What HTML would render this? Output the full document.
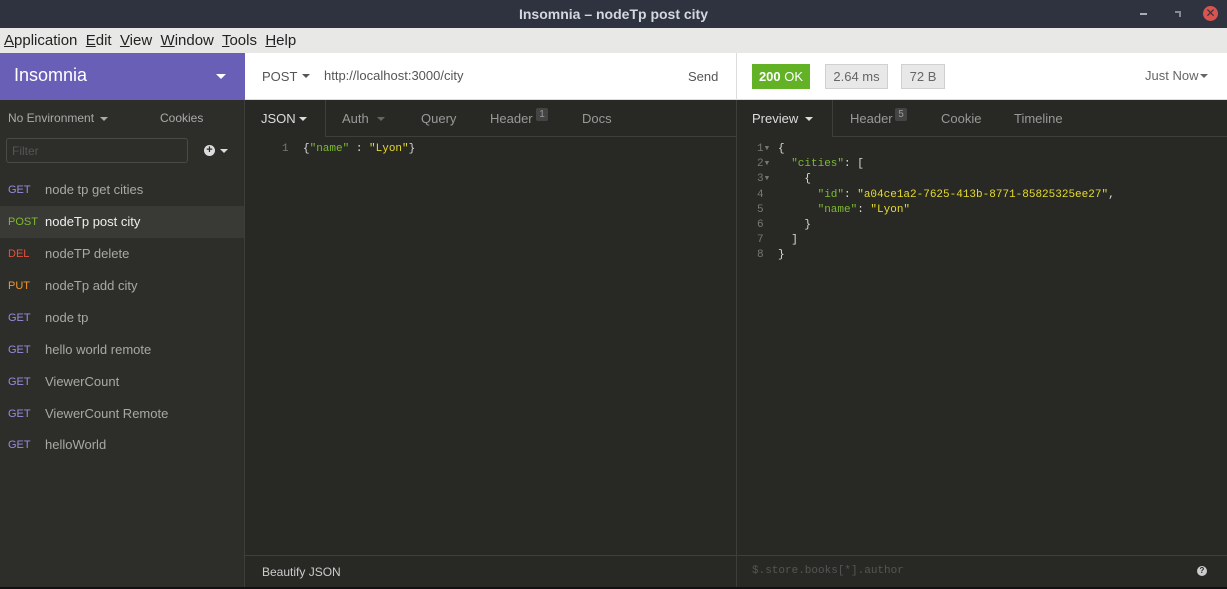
<!DOCTYPE html>
<html><head><style>
*{margin:0;padding:0;box-sizing:border-box}
body{width:1227px;height:589px;overflow:hidden;background:#282925;font-family:"Liberation Sans","DejaVu Sans",sans-serif;position:relative}
.a{position:absolute;white-space:nowrap}
.mono{font-family:"Liberation Mono","DejaVu Sans Mono",monospace}
.row{position:absolute;left:0;width:244px;height:32px;line-height:32px}
.row .m{position:absolute;left:8px;font-size:11px}
.row .n{position:absolute;left:45px;font-size:13px;color:#a8a8a4}
</style></head><body>
<div class="a" style="left:0;top:0;width:1227px;height:28px;background:#2f3340"></div>
<div class="a" style="left:0;top:6px;width:1227px;text-align:center;color:#d3d7df;font-size:14px;font-weight:bold">Insomnia – nodeTp post city</div>
<div class="a" style="left:1140px;top:13px;width:7px;height:2px;background:#aab"></div>
<div class="a" style="left:1175px;top:11px;width:6px;height:6px;border-top:2px solid #889;border-right:2px solid #889"></div>
<div class="a" style="left:1203px;top:6px;width:15px;height:15px;border-radius:50%;background:#d9534f;color:#2f3340;font-size:12px;font-weight:bold;text-align:center;line-height:15px">✕</div>
<div class="a" style="left:0;top:28px;width:1227px;height:25px;background:#e8e8e7"></div>
<div class="a" style="left:4px;top:32px;font-size:15px;color:#222">
<u>A</u>pplication&nbsp; <u>E</u>dit&nbsp; <u>V</u>iew&nbsp; <u>W</u>indow&nbsp; <u>T</u>ools&nbsp; <u>H</u>elp</div>
<div class="a" style="left:0;top:53px;width:245px;height:47px;background:#6a5fb7"></div>
<div class="a" style="left:14px;top:65px;color:#fff;font-size:18px">Insomnia</div>
<div class="a" style="left:216px;top:74px;border-left:5px solid transparent;border-right:5px solid transparent;border-top:5px solid #fff"></div>
<div class="a" style="left:245px;top:53px;width:982px;height:47px;background:#fff;border-bottom:1px solid #ddd"></div>
<div class="a" style="left:736px;top:53px;width:1px;height:47px;background:#ddd"></div>
<div class="a" style="left:262px;top:69px;font-size:13px;color:#555">POST</div>
<div class="a" style="left:302px;top:74px;border-left:4px solid transparent;border-right:4px solid transparent;border-top:4px solid #555"></div>
<div class="a" style="left:324px;top:68px;font-size:13px;color:#555">http://localhost:3000/city</div>
<div class="a" style="left:688px;top:69px;font-size:13px;color:#555">Send</div>
<div class="a" style="left:752px;top:64px;width:58px;height:25px;background:#63b125;color:#fff;font-size:13px;line-height:25px;text-align:center"><b>200</b> OK</div>
<div class="a" style="left:825px;top:64px;width:63px;height:25px;background:#e8e8e8;border:1px solid #d0d0d0;color:#666;font-size:13px;line-height:23px;text-align:center">2.64 ms</div>
<div class="a" style="left:901px;top:64px;width:44px;height:25px;background:#e8e8e8;border:1px solid #d0d0d0;color:#666;font-size:13px;line-height:23px;text-align:center">72 B</div>
<div class="a" style="left:1145px;top:68px;font-size:13px;color:#666">Just Now</div>
<div class="a" style="left:1200px;top:74px;border-left:4px solid transparent;border-right:4px solid transparent;border-top:4px solid #666"></div>
<div class="a" style="left:0;top:100px;width:245px;height:489px;background:#2d2d2a;border-right:1px solid #3e3e3a"></div>
<div class="a" style="left:8px;top:111px;font-size:12px;color:#aaa">No Environment</div>
<div class="a" style="left:100px;top:117px;border-left:4px solid transparent;border-right:4px solid transparent;border-top:4px solid #aaa"></div>
<div class="a" style="left:160px;top:111px;font-size:12px;color:#aaa">Cookies</div>
<div class="a" style="left:6px;top:138px;width:182px;height:25px;border:1px solid #4a4a46;border-radius:3px"></div>
<div class="a" style="left:12px;top:144px;font-size:12px;color:#555">Filter</div>
<div class="a" style="left:204px;top:145px;width:11px;height:11px;border-radius:50%;background:#ddd;color:#2d2d2a;font-size:11px;line-height:11px;text-align:center;font-weight:bold">+</div>
<div class="a" style="left:220px;top:149px;border-left:4px solid transparent;border-right:4px solid transparent;border-top:4px solid #ddd"></div>
<div class="row" style="top:174px"><span class="m" style="color:#958ee0">GET</span><span class="n">node tp get cities</span></div>
<div class="row" style="top:206px;background:#393936"><span class="m" style="color:#7cbb30">POST</span><span class="n" style="color:#eee">nodeTp post city</span></div>
<div class="row" style="top:238px"><span class="m" style="color:#e2533e">DEL</span><span class="n">nodeTP delete</span></div>
<div class="row" style="top:270px"><span class="m" style="color:#f0982d">PUT</span><span class="n">nodeTp add city</span></div>
<div class="row" style="top:302px"><span class="m" style="color:#958ee0">GET</span><span class="n">node tp</span></div>
<div class="row" style="top:334px"><span class="m" style="color:#958ee0">GET</span><span class="n">hello world remote</span></div>
<div class="row" style="top:366px"><span class="m" style="color:#958ee0">GET</span><span class="n">ViewerCount</span></div>
<div class="row" style="top:398px"><span class="m" style="color:#958ee0">GET</span><span class="n">ViewerCount Remote</span></div>
<div class="row" style="top:429px"><span class="m" style="color:#958ee0">GET</span><span class="n">helloWorld</span></div>
<div class="a" style="left:325px;top:136px;width:411px;height:1px;background:#3e3e3a"></div>
<div class="a" style="left:325px;top:100px;width:1px;height:37px;background:#3e3e3a"></div>
<div class="a" style="left:736px;top:100px;width:1px;height:489px;background:#3e3e3a"></div>
<div class="a" style="left:261px;top:111px;font-size:13px;color:#ddd">JSON</div>
<div class="a" style="left:299px;top:117px;border-left:4px solid transparent;border-right:4px solid transparent;border-top:4px solid #ddd"></div>
<div class="a" style="left:342px;top:111px;font-size:13px;color:#999">Auth</div>
<div class="a" style="left:377px;top:117px;border-left:4px solid transparent;border-right:4px solid transparent;border-top:4px solid #666"></div>
<div class="a" style="left:421px;top:111px;font-size:13px;color:#999">Query</div>
<div class="a" style="left:490px;top:111px;font-size:13px;color:#999">Header</div>
<div class="a" style="left:536px;top:108px;width:12px;height:13px;background:#444;color:#999;font-size:10px;text-align:center;line-height:13px;border-radius:2px">1</div>
<div class="a" style="left:582px;top:111px;font-size:13px;color:#999">Docs</div>
<div class="a mono" style="left:282px;top:143px;font-size:11px;color:#777">1</div>
<div class="a mono" style="left:303px;top:143px;font-size:11px;color:#ddd">{<span style="color:#7cbb30">"name"</span> :  <span style="color:#e6db2e">"Lyon"</span>}</div>
<div class="a" style="left:832px;top:136px;width:395px;height:1px;background:#3e3e3a"></div>
<div class="a" style="left:832px;top:100px;width:1px;height:37px;background:#3e3e3a"></div>
<div class="a" style="left:752px;top:111px;font-size:13px;color:#ddd">Preview</div>
<div class="a" style="left:805px;top:117px;border-left:4px solid transparent;border-right:4px solid transparent;border-top:4px solid #ddd"></div>
<div class="a" style="left:850px;top:111px;font-size:13px;color:#999">Header</div>
<div class="a" style="left:895px;top:108px;width:12px;height:13px;background:#444;color:#999;font-size:10px;text-align:center;line-height:13px;border-radius:2px">5</div>
<div class="a" style="left:941px;top:111px;font-size:13px;color:#999">Cookie</div>
<div class="a" style="left:1014px;top:111px;font-size:13px;color:#999">Timeline</div>
<div class="a mono" style="left:757px;top:142px;font-size:11px;line-height:15.2px;color:#777">1▾<br>2▾<br>3▾<br>4<br>5<br>6<br>7<br>8</div>
<div class="a mono" style="left:778px;top:142px;font-size:11px;line-height:15.2px;color:#ddd;white-space:pre">{
  <span style="color:#7cbb30">"cities"</span>: [
    {
      <span style="color:#7cbb30">"id"</span>: <span style="color:#e6db2e">"a04ce1a2-7625-413b-8771-85825325ee27"</span>,
      <span style="color:#7cbb30">"name"</span>: <span style="color:#e6db2e">"Lyon"</span>
    }
  ]
}</div>
<div class="a" style="left:245px;top:555px;width:982px;height:1px;background:#3e3e3a"></div>
<div class="a" style="left:262px;top:565px;font-size:12px;color:#ccc">Beautify JSON</div>
<div class="a mono" style="left:752px;top:565px;font-size:11px;color:#555">$.store.books[*].author</div>
<div class="a" style="left:1197px;top:566px;width:10px;height:10px;border-radius:50%;background:#ccc;color:#282925;font-size:8px;font-weight:bold;text-align:center;line-height:10px">?</div>
<div class="a" style="left:0;top:587px;width:1227px;height:2px;background:#111"></div>
</body></html>
